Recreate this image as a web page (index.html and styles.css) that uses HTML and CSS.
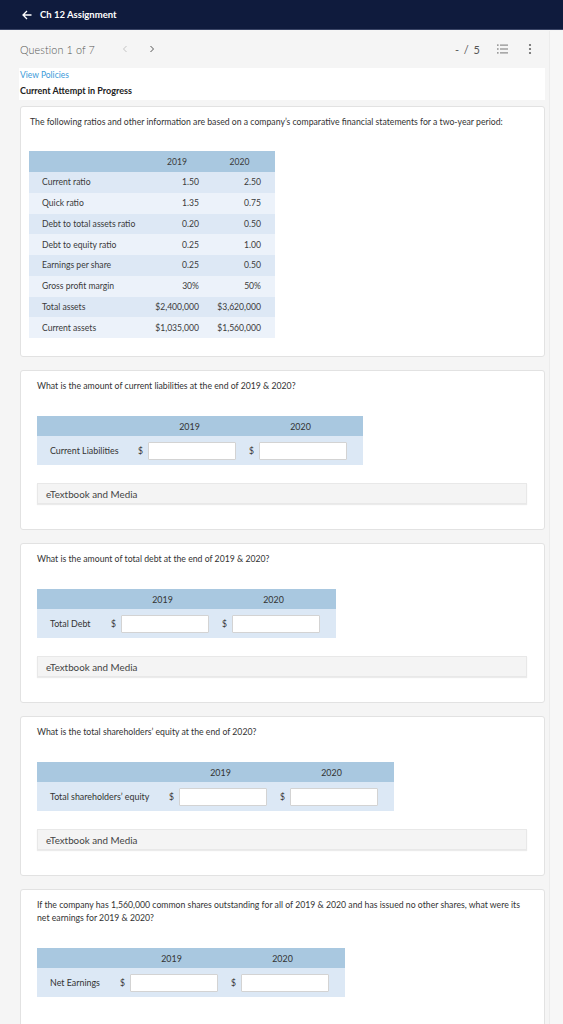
FILE: index.html
```html
<!DOCTYPE html>
<html lang="en">
<head>
<meta charset="utf-8">
<title>Ch 12 Assignment</title>
<link rel="stylesheet" href="styles.css">
</head>
<body>
<header class="topbar">
  <svg class="back" width="10" height="10" viewBox="0 0 10 10"><path d="M5 1 L1 5 L5 9 M1 5 H9.5" fill="none" stroke="#fff" stroke-width="1.3"/></svg>
  <span class="title">Ch 12 Assignment</span>
</header>

<div class="qbar">
  <span class="qnum">Question 1 of 7</span>
  <svg class="chev prev" width="6" height="8" viewBox="0 0 6 8"><path d="M4.5 1 L1.5 4 L4.5 7" fill="none" stroke="#c4c4c4" stroke-width="1"/></svg>
  <svg class="chev next" width="6" height="8" viewBox="0 0 6 8"><path d="M1.5 1 L4.5 4 L1.5 7" fill="none" stroke="#555" stroke-width="1"/></svg>
  <span class="spacer"></span>
  <span class="score">- / 5</span>
  <svg class="listicon" width="11" height="10" viewBox="0 0 11 10"><g fill="#777"><rect x="0" y="0.5" width="1.6" height="1.2"/><rect x="0" y="4.4" width="1.6" height="1.2"/><rect x="0" y="8.3" width="1.6" height="1.2"/><rect x="3" y="0.6" width="8" height="1"/><rect x="3" y="4.5" width="8" height="1"/><rect x="3" y="8.4" width="8" height="1"/></g></svg>
  <svg class="kebab" width="4" height="12" viewBox="0 0 4 12"><g fill="#666"><circle cx="2" cy="2" r="1.1"/><circle cx="2" cy="6" r="1.1"/><circle cx="2" cy="10" r="1.1"/></g></svg>
</div>

<main class="content">
  <div class="policies">
    <a class="viewpol">View Policies</a>
    <div class="attempt">Current Attempt in Progress</div>
  </div>

  <section class="card stem">
    <p class="qtext">The following ratios and other information are based on a company’s comparative financial statements for a two-year period:</p>
    <table class="data">
      <thead>
        <tr><th class="c1"></th><th class="c2">2019</th><th class="c3">2020</th></tr>
      </thead>
      <tbody>
        <tr class="dk"><td class="c1">Current ratio</td><td class="c2">1.50</td><td class="c3">2.50</td></tr>
        <tr class="lt"><td class="c1">Quick ratio</td><td class="c2">1.35</td><td class="c3">0.75</td></tr>
        <tr class="dk"><td class="c1">Debt to total assets ratio</td><td class="c2">0.20</td><td class="c3">0.50</td></tr>
        <tr class="lt"><td class="c1">Debt to equity ratio</td><td class="c2">0.25</td><td class="c3">1.00</td></tr>
        <tr class="dk"><td class="c1">Earnings per share</td><td class="c2">0.25</td><td class="c3">0.50</td></tr>
        <tr class="lt"><td class="c1">Gross profit margin</td><td class="c2">30%</td><td class="c3">50%</td></tr>
        <tr class="dk"><td class="c1">Total assets</td><td class="c2">$2,400,000</td><td class="c3">$3,620,000</td></tr>
        <tr class="lt"><td class="c1">Current assets</td><td class="c2">$1,035,000</td><td class="c3">$1,560,000</td></tr>
      </tbody>
    </table>
  </section>

  <section class="card part">
    <p class="qtext">What is the amount of current liabilities at the end of 2019 &amp; 2020?</p>
    <div class="ans">
      <div class="ans-head"><span class="lab lab-cl"></span><span class="grp">2019</span><span class="grp">2020</span></div>
      <div class="ans-row"><span class="lab lab-cl">Current Liabilities</span><span class="grp"><span class="dol">$</span><input class="inp" type="text"></span><span class="grp"><span class="dol">$</span><input class="inp" type="text"></span></div>
    </div>
    <div class="etext">eTextbook and Media</div>
  </section>

  <section class="card part">
    <p class="qtext">What is the amount of total debt at the end of 2019 &amp; 2020?</p>
    <div class="ans">
      <div class="ans-head"><span class="lab lab-td"></span><span class="grp">2019</span><span class="grp">2020</span></div>
      <div class="ans-row"><span class="lab lab-td">Total Debt</span><span class="grp"><span class="dol">$</span><input class="inp" type="text"></span><span class="grp"><span class="dol">$</span><input class="inp" type="text"></span></div>
    </div>
    <div class="etext">eTextbook and Media</div>
  </section>

  <section class="card part">
    <p class="qtext">What is the total shareholders’ equity at the end of 2020?</p>
    <div class="ans">
      <div class="ans-head"><span class="lab lab-se"></span><span class="grp">2019</span><span class="grp">2020</span></div>
      <div class="ans-row"><span class="lab lab-se">Total shareholders’ equity</span><span class="grp"><span class="dol">$</span><input class="inp" type="text"></span><span class="grp"><span class="dol">$</span><input class="inp" type="text"></span></div>
    </div>
    <div class="etext">eTextbook and Media</div>
  </section>

  <section class="card part last">
    <p class="qtext">If the company has 1,560,000 common shares outstanding for all of 2019 &amp; 2020 and has issued no other shares, what were its net earnings for 2019 &amp; 2020?</p>
    <div class="ans">
      <div class="ans-head"><span class="lab lab-ne"></span><span class="grp">2019</span><span class="grp">2020</span></div>
      <div class="ans-row"><span class="lab lab-ne">Net Earnings</span><span class="grp"><span class="dol">$</span><input class="inp" type="text"></span><span class="grp"><span class="dol">$</span><input class="inp" type="text"></span></div>
    </div>
    <div class="etext">eTextbook and Media</div>
  </section>
</main>
<div class="scrolltrack"></div>
</body>
</html>
```

FILE: styles.css
```css
* { box-sizing: border-box; }
html, body { margin: 0; padding: 0; }
body {
  background: #f5f5f5;
  font-family: Lato, "Open Sans", "Liberation Sans", sans-serif;
  color: #333;
}

.topbar {
  height: 30px;
  background: #0f1b3d;
  display: flex;
  align-items: center;
  padding-left: 22px;
  border-bottom: 1px solid #3a4566;
}
.topbar .back { margin-right: 8px; }
.topbar .title {
  color: #fff;
  font-size: 9.5px;
  font-weight: 700;
}

.qbar {
  height: 38px;
  display: flex;
  align-items: center;
  padding-left: 20px;
  padding-right: 31px;
}
.qnum {
  font-size: 10.8px;
  color: #555;
  font-weight: 300;
  letter-spacing: 0.1px;
}
.chev.prev { margin-left: 27px; }
.chev.next { margin-left: 21px; }
.spacer { flex: 1; }
.score {
  font-size: 11px;
  color: #555;
  letter-spacing: 1px;
}
.listicon { margin-left: 16px; }
.kebab { margin-left: 20px; }

.content {
  padding-left: 20px;
  width: 545px;
}

.policies {
  margin-left: -1px;
  background: #fff;
  height: 32px;
  padding-left: 1px;
  padding-top: 1px;
}
.viewpol {
  display: block;
  color: #3a9ad9;
  font-size: 8.5px;
  line-height: 12px;
}
.attempt {
  margin-top: 4px;
  font-size: 9px;
  line-height: 12px;
  font-weight: 700;
  color: #222;
}

.card {
  background: #fff;
  border: 1px solid #e2e2e2;
  border-radius: 3px;
  width: 525px;
}
.stem {
  margin-top: 6px;
  padding: 8px 10px 18px 8px;
}
.part {
  margin-top: 13px;
  padding: 8px 17px 25px 16px;
}
.qtext {
  margin: 0;
  font-size: 8.7px;
  line-height: 13px;
  color: #333;
}
.stem .qtext { padding-left: 1px; }

.data {
  margin-top: 23px;
  border-collapse: collapse;
  font-size: 8.6px;
  color: #3a3a3a;
}
.data th, .data td { padding: 0; }
.data thead tr { background: #a9c8e0; height: 21px; }
.data th { font-weight: 400; text-align: center; }
.data tbody tr { height: 20.75px; }
.data tr.dk { background: #dde8f5; }
.data tr.lt { background: #ecf2fa; }
.data .c1 { width: 121px; text-align: left; padding-left: 13px; }
.data .c2 { width: 54px; }
.data td.c2 { text-align: right; padding-right: 5px; }
.data .c3 { width: 71px; }
.data td.c3 { text-align: right; padding-right: 14px; }

.ans {
  margin-top: 24px;
  display: flex;
  width: max-content;
  flex-direction: column;
  font-size: 8.9px;
  color: #333;
}
.ans-head {
  display: flex;
  align-items: center;
  height: 20px;
  background: #a9c8e0;
  padding-right: 7px;
}
.ans-row {
  display: flex;
  align-items: center;
  height: 29px;
  background: #dce8f5;
  padding-right: 7px;
}
.lab { padding-left: 13px; flex: none; white-space: nowrap; }
.lab-cl { width: 97px; }
.lab-td { width: 70px; }
.lab-se { width: 128px; }
.lab-ne { width: 79px; }
.grp {
  width: 111px;
  flex: none;
  display: flex;
  align-items: center;
}
.ans-head .grp { justify-content: center; }
.dol {
  margin-left: 4px;
  width: 6px;
  font-size: 8.6px;
}
.inp {
  margin: 0 0 0 4px;
  width: 88px;
  height: 18px;
  border: 1px solid #d3d3d3;
  border-radius: 1px;
  background: #fff;
  padding: 0;
  outline: none;
}

.etext {
  margin-top: 18px;
  height: 21px;
  background: #f4f4f4;
  border: 1px solid #e8e8e8;
  box-shadow: 0 1px 1px rgba(0,0,0,0.08);
  font-size: 9.8px;
  color: #444;
  display: flex;
  align-items: center;
  padding-left: 8px;
}
.card.last .etext { margin-top: 64px; }

.scrolltrack {
  position: fixed;
  top: 31px;
  right: 0;
  width: 14px;
  bottom: 0;
  background: #f7f7f7;
  border-left: 1px solid #ececec;
}
```
